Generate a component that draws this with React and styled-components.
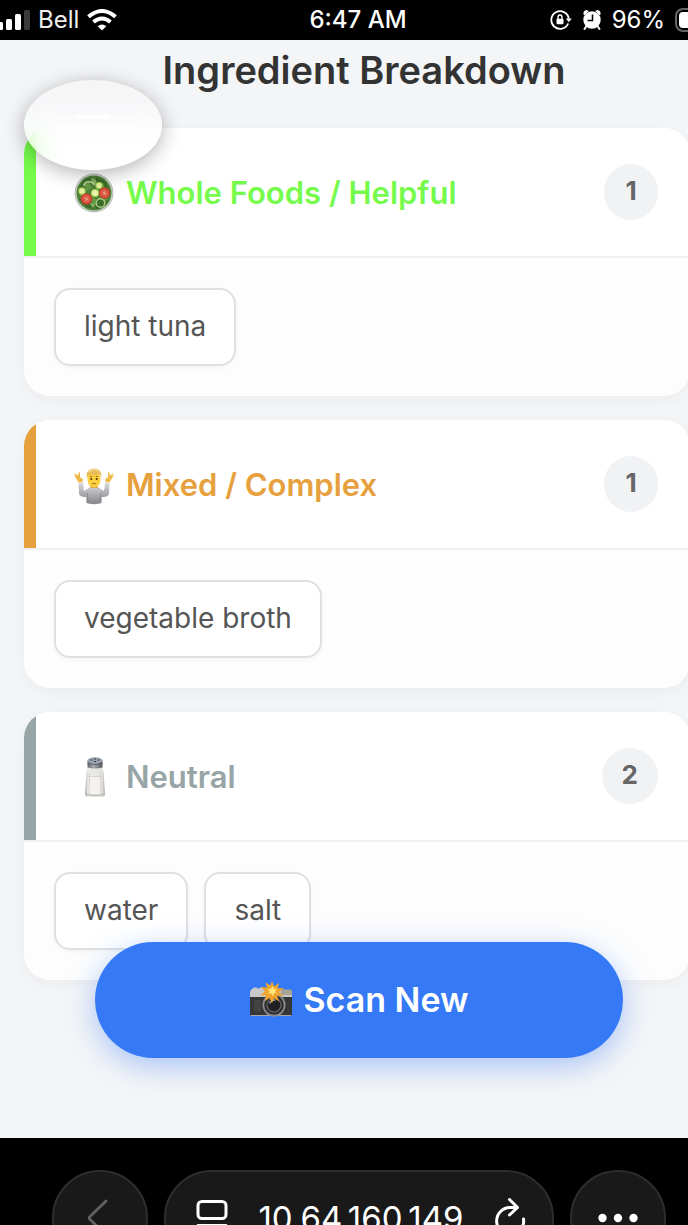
import { useState } from "react";
import styled, { createGlobalStyle } from "styled-components";

const groups = [
   { id: "helpful", title: "Whole Foods / Helpful", color: "#76fb4c", Icon: SaladIcon, items: ["light tuna"] },
   { id: "mixed", title: "Mixed / Complex", color: "#e6a03e", Icon: ShrugIcon, items: ["vegetable broth"] },
   { id: "neutral", title: "Neutral", color: "#98a5a6", Icon: SaltIcon, items: ["water", "salt"] },
]

function SaladIcon() {
   return (
      <svg width="40" height="40" viewBox="0 0 40 40" aria-hidden="true">
         <circle cx="20" cy="20" r="19.5" fill="#b9bdb9" />
         <circle cx="20" cy="20" r="18.5" fill="#cfd8ca" />
         <circle cx="20" cy="20" r="17.5" fill="#4f8239" />
         <path d="M5 15l5-8 7-3 3 6-6 6zM22 4l9 4 4 8-8 1-6-5zM5 26l8-3 5 7 2 6-8-2zM22 27l9-2 3 3-6 7-7 1z" fill="#3a6b2a" />
         <path d="M9 11l6-2 3 5-5 4zM24 9l5 1 2 5-6 1zM16 23l5 2 3 8-6-2zM29 24l5 1-3 5z" fill="#659a45" />
         <path d="M17 5l5 2 1 5-5-1zM6 21l5 1-3 3zM15 30l6 1-2 4z" fill="#85b25d" />
         <path d="M10 13c0-5 8-6 10-1" fill="none" stroke="#c4d49c" strokeWidth="1.4" />
         <circle cx="26.5" cy="30" r="4.2" fill="none" stroke="#a9c77f" strokeWidth="1.4" />
         <circle cx="8" cy="18" r="3.7" fill="#a8d552" />
         <circle cx="8" cy="18" r="2.6" fill="#e6f0a4" />
         <circle cx="25" cy="12.5" r="3.6" fill="#a8d552" />
         <circle cx="25" cy="12.5" r="2.5" fill="#e6f0a4" />
         <circle cx="12.5" cy="26" r="5.8" fill="#c9402f" />
         <circle cx="12.5" cy="26" r="4.2" fill="#dd5a45" />
         <circle cx="30.5" cy="20" r="5.7" fill="#c9402f" />
         <circle cx="30.5" cy="20" r="4.1" fill="#dd5a45" />
         <path d="M10.5 25l4 2M12 28l1-4M28.5 19l4 2M30 22l1-4" stroke="#eda584" strokeWidth="1" />
         <circle cx="21" cy="20" r="4" fill="#a8d552" />
         <circle cx="21" cy="20" r="2.9" fill="#eef3b0" />
      </svg>
   )
}

function ShrugIcon() {
   return (
      <svg width="40" height="40" viewBox="0 0 40 40" aria-hidden="true">
         <defs>
            <linearGradient id="shirt" x1="0" y1="0" x2="0" y2="1">
               <stop offset="0" stopColor="#cfcfd1" />
               <stop offset="1" stopColor="#85858a" />
            </linearGradient>
            <linearGradient id="sleeve" x1="0" y1="0" x2="0" y2="1">
               <stop offset="0" stopColor="#dcdcdf" />
               <stop offset="1" stopColor="#9c9ca1" />
            </linearGradient>
         </defs>
         <path d="M4.5 18l4.500-.5 1 8.500 5-3v8c-3 1.500-9 1.500-10-2z" fill="url(#sleeve)" />
         <path d="M35.500 18l-4.500-.5-1 8.500-5-3v8c3 1.500 9 1.500 10-2z" fill="url(#sleeve)" />
         <path d="M13 25c1-2.500 4-3.500 7-3.500s6 1 7 3.500l1 4-.5 9c-4 1.500-11 1.500-15 0L12 29z" fill="url(#shirt)" />
         <path d="M13.500 28l.5 9.500M26.500 28l-.5 9.500" stroke="#85858a" strokeWidth=".8" />
         <path d="M0 7.500l4 3 1-3.500 1 .5v4.500l3 2.500-.5 2.500-4 .5-2-3.500L0 10l2 .5z" fill="#edbb47" />
         <path d="M40 7.500l-4 3-1-3.500-1 .5v4.500l-3 2.500.5 2.500 4 .5 2-3.500L40 10l-2 .5z" fill="#edbb47" />
         <ellipse cx="20" cy="14.500" rx="6.500" ry="8" fill="#fbcf3d" />
         <path d="M16 20.500c2 2.500 6 2.500 8 0l-1 2.500h-6z" fill="#dba02b" />
         <path d="M13 14C11.500 7 14.500 3.500 20 3.500s8.500 3.500 7 10.500l-1-4.500c-4 1-7 .5-10-.5l-2 2z" fill="#e8bd5c" />
         <path d="M14.500 7c2-2.500 7-3 10-1" stroke="#f8e09c" strokeWidth="1.200" fill="none" />
         <circle cx="17.300" cy="14" r="1" fill="#4e3213" />
         <circle cx="22.700" cy="14" r="1" fill="#4e3213" />
         <path d="M15.800 11.800l2.400-.5M21.800 11.300l2.400.5M18 19q2-1.500 4 0" stroke="#94611a" strokeWidth=".9" fill="none" />
      </svg>
   )
}

function SaltIcon() {
   return (
      <svg width="40" height="40" viewBox="0 0 40 40" aria-hidden="true">
         <defs>
            <linearGradient id="glass">
               <stop offset="0" stopColor="#a9a8a6" />
               <stop offset=".15" stopColor="#eeedeb" />
               <stop offset=".85" stopColor="#e4e2df" />
               <stop offset="1" stopColor="#aeadab" />
            </linearGradient>
            <linearGradient id="cap">
               <stop offset="0" stopColor="#65686d" />
               <stop offset=".4" stopColor="#a5a9ae" />
               <stop offset="1" stopColor="#575a5f" />
            </linearGradient>
         </defs>
         <path d="M14 10.500h14l1.500 5L31 37c0 2.500-2 3-4 3H15c-2 0-4-.5-4-3l1.500-21.500z" fill="url(#glass)" />
         <path d="M16 20h10v17H16z" fill="#f4f2ef" />
         <path d="M15.500 15L15 37.500M26.500 15L27 37.500M13.500 19.500h15" stroke="#d2d0cd" strokeWidth=".8" />
         <path d="M12 37.500q9 2 18 0" stroke="#b0aeab" strokeWidth="1" fill="none" />
         <path d="M13.500 3.500h15v7q-7.500 2-15 0z" fill="url(#cap)" />
         <path d="M13.500 6.500q7.500 2 15 0" stroke="#55585c" strokeWidth=".9" fill="none" />
         <ellipse cx="21" cy="3.500" rx="7.500" ry="3.200" fill="#9ba3ae" />
         <path d="M16.500 3h2M20 2h2M23.500 3h2M20 4.500h2" stroke="#313b4c" strokeWidth="1.200" />
      </svg>
   )
}

function CameraIcon() {
   return (
      <svg width="44" height="36" viewBox="0 0 44 36" aria-hidden="true">
         <path d="M3 8l2-1.500h3L9 8l2-1.500h3L15 9h26q2 0 2 2v7H1v-6q0-3 2-4z" fill="#c9c9c9" />
         <path d="M32 8.500h9q2 0 2 2V14H32z" fill="#aaa293" />
         <path d="M1 16h42v17q0 2-2 2H3q-2 0-2-2z" fill="#363636" />
         <path d="M2 34.500h40" stroke="#a7a7a7" strokeWidth="1.200" />
         <path d="M5 19h7v12H5z" fill="#434343" />
         <circle cx="25" cy="24" r="11.500" fill="#8d8d8f" />
         <circle cx="25" cy="24" r="9.800" fill="#303033" />
         <circle cx="25" cy="24" r="7.500" fill="#66666a" />
         <circle cx="25" cy="24" r="6.300" fill="#202024" />
         <path d="M20.500 22.500q2-4 6-3.500" stroke="#a4a4ac" strokeWidth="1.500" fill="none" />
         <path d="M23 0l2 5.500 5-3.500-1.500 5.500 6.500-.5-5 4 4 4-6-.5 2 6-5-3.500-2 5-2.500-5-4.500 3 1-5.500-5.500 0 4.500-4.500-4.500-4 6.500.5-1.500-5 5 3z" fill="#f0a52c" />
         <path d="M24 5l1 3 3-.5-2 2.500 2 2-3 .2-1 3-2-3-3 .5 1.500-2.700-2-2 3 0z" fill="#ffe27a" />
      </svg>
   )
}

function SignalIcon() {
   return (
      <svg width="30" height="22" viewBox="0 0 30 22" aria-hidden="true" fill="#fff">
         <rect x="-4" y="13" width="7" height="8" rx="1.500" />
         <rect x="6" y="10" width="6" height="11" rx="1.500" />
         <rect x="15" y="5" width="6" height="16" rx="1.500" />
         <rect x="24" y="1" width="6" height="20" rx="1.500" fill="#3a3a3a" />
      </svg>
   )
}

function WifiIcon() {
   return (
      <svg width="30" height="22" viewBox="0 0 30 22" aria-hidden="true" fill="none" stroke="#fff" strokeWidth="4">
         <path d="M1.500 7.800q13.500-11.600 27 0" />
         <path d="M6.500 13q8.500-7 17 0" />
         <path d="M15 21.500l-4.300-4.300q4.300-3.400 8.600 0z" fill="#fff" stroke="none" />
      </svg>
   )
}

function RotationLockIcon() {
   return (
      <svg width="22" height="22" viewBox="0 0 22 22" aria-hidden="true" fill="none" stroke="#fff" strokeWidth="1.800">
         <path d="M18.200 14.500A8.800 8.800 0 1 1 18.800 9.500" />
         <path d="M15.800 9.500h6l-3 3.800z" fill="#fff" stroke="none" />
         <path d="M8 10V8.200q0-2.200 2-2.200t2 2.200V10" strokeWidth="1.400" />
         <rect x="6.500" y="9.800" width="7" height="5.500" rx="1" fill="#fff" stroke="none" />
      </svg>
   )
}

function AlarmIcon() {
   return (
      <svg width="20" height="22" viewBox="0 0 20 22" aria-hidden="true">
         <path d="M2 6.500Q0 2 4.500 1L7 2zM18 6.500Q20 2 15.500 1L13 2z" fill="#fff" />
         <path d="M4.500 17l-2 3M15.500 17l2 3" stroke="#fff" strokeWidth="2" strokeLinecap="round" />
         <circle cx="10" cy="11" r="8.700" fill="#fff" />
         <path d="M10.500 5.500v6H5.500" fill="none" stroke="#000" strokeWidth="1.500" />
      </svg>
   )
}

function BatteryIcon() {
   return (
      <svg width="13" height="24" viewBox="0 0 13 24" aria-hidden="true">
         <rect x="1" y="1" width="44" height="22" rx="7" fill="none" stroke="#666" strokeWidth="2" />
         <rect x="4" y="4" width="38" height="16" rx="4" fill="#fff" />
      </svg>
   )
}

function Group({ title, color, Icon, items }) {
   return (
      <Card>
         <CardHeader $color={color}>
            <CardLabel>
               <Icon />
               <CardTitle $color={color}>{title}</CardTitle>
            </CardLabel>
            <Count>{items.length}</Count>
         </CardHeader>
         <Chips>
            {items.map((item) => <Chip key={item}>{item}</Chip>)}
         </Chips>
      </Card>
   )
}

function App() {
   const [isMenuClicked, setisMenuClicked] = useState(false)

   return (
      <Phone>
         <GlobalStyle />
         <StatusBar>
            <StatusSide>
               <SignalIcon />
               <Carrier>Bell</Carrier>
               <WifiIcon />
            </StatusSide>
            <Time>6:47 AM</Time>
            <StatusSide $right>
               <RotationLockIcon />
               <AlarmIcon />
               <span>96%</span>
               <BatteryIcon />
            </StatusSide>
         </StatusBar>

         <Screen>
            <PageTitle>Ingredient Breakdown</PageTitle>
            <List>
               {groups.map((group) => <Group key={group.id} {...group} />)}
            </List>
            <MenuButton
               type="button"
               aria-label="Menu"
               aria-expanded={isMenuClicked}
               onClick={() => setisMenuClicked(!isMenuClicked)}
            >
               <MenuLine />
               <MenuLine />
               <MenuLine />
            </MenuButton>
            <ScanButton type="button">
               <CameraIcon />
               Scan New
            </ScanButton>
         </Screen>

         <BrowserBar>
            <RoundButton type="button" aria-label="Back">
               <svg width="24" height="40" viewBox="0 0 24 40" fill="none" stroke="#606060" strokeWidth="3" strokeLinecap="round" strokeLinejoin="round">
                  <path d="M18 3L0.500 20l17.500 17" />
               </svg>
            </RoundButton>
            <AddressBar>
               <PlainButton type="button" aria-label="Page settings">
                  <svg width="32" height="36" viewBox="0 0 32 36" fill="none" stroke="#fff" strokeWidth="3">
                     <rect x="2" y="1.500" width="28" height="17" rx="4" />
                     <path d="M2 25.500h28M2 33h18" strokeLinecap="round" />
                  </svg>
               </PlainButton>
               <Address href="#">10.64.160.149</Address>
               <PlainButton type="button" aria-label="Reload">
                  <svg width="32" height="42" viewBox="0 0 32 42" fill="none" stroke="#fff" strokeWidth="3" strokeLinecap="round" strokeLinejoin="round">
                     <path d="M23 10.500H16.500A13.500 13.500 0 1 0 29.500 22" />
                     <path d="M15.500 2.500l8 8-8 7.500" />
                  </svg>
               </PlainButton>
            </AddressBar>
            <RoundButton type="button" aria-label="More">
               <svg width="40" height="10" viewBox="0 0 40 10" fill="#fff">
                  <circle cx="4.500" cy="5" r="4.200" />
                  <circle cx="20" cy="5" r="4.200" />
                  <circle cx="35.500" cy="5" r="4.200" />
               </svg>
            </RoundButton>
         </BrowserBar>
      </Phone>
   )
}

export default App;

const GlobalStyle = createGlobalStyle`
   * {
      box-sizing: border-box;
   }
   body {
      margin: 0;
      background-color: #000;
      font-family: Inter, "Liberation Sans", sans-serif;
   }
   button {
      font-family: inherit;
      border: none;
      cursor: pointer;
   }
   svg {
      display: block;
      flex-shrink: 0;
   }
`;

const Phone = styled.div`
   height: 100vh;
   display: flex;
   flex-direction: column;
   overflow: hidden;
`;

const StatusBar = styled.header`
   height: 40px;
   flex-shrink: 0;
   display: grid;
   grid-template-columns: 1fr auto 1fr;
   align-items: center;
   background-color: #000;
   color: #fff;
   font-size: 24px;
   line-height: 32px;
   overflow: hidden;
`;

const StatusSide = styled.div`
   display: flex;
   align-items: center;
   gap: ${({ $right }) => ($right ? "10px" : "8px")};
   justify-content: ${({ $right }) => ($right ? "flex-end" : "flex-start")};
`;

const Carrier = styled.span`
   color: #eee;
`;

const Time = styled.span`
   font-weight: 500;
   margin-left: 28px;
`;

const Screen = styled.main`
   flex: 1;
   min-height: 0;
   position: relative;
   overflow: hidden;
   background-color: #f4f5f7;
`;

const PageTitle = styled.h1`
   margin: 0;
   padding: 6px 0 34px 40px;
   text-align: center;
   color: #333;
   font-size: 38px;
   font-weight: 600;
   line-height: 48px;
`;

const List = styled.div`
   display: flex;
   flex-direction: column;
   gap: 24px;
   margin: 0 -2px 0 24px;
`;

const Card = styled.section`
   border-radius: 26px;
   overflow: hidden;
   background-color: #fdfdfd;
   box-shadow: 0 4px 16px rgba(0, 0, 0, 0.04);
`;

const CardHeader = styled.div`
   height: 128px;
   display: flex;
   align-items: center;
   justify-content: space-between;
   padding: 0 32px 0 38px;
   background-color: #fff;
   border-left: 12px solid ${({ $color }) => $color};
`;

const CardLabel = styled.div`
   display: flex;
   align-items: center;
   gap: 12px;
   padding-top: 2px;
`;

const CardTitle = styled.h2`
   margin: 0;
   color: ${({ $color }) => $color};
   font-size: 31px;
   font-weight: 600;
   line-height: 40px;
`;

const Count = styled.span`
   min-width: 54px;
   padding: 0 20px 2px;
   border-radius: 28px;
   background-color: #f1f2f4;
   color: #666;
   text-align: center;
   font-size: 26px;
   font-weight: 700;
   line-height: 54px;
`;

const Chips = styled.div`
   display: flex;
   flex-wrap: wrap;
   gap: 16px;
   padding: 30px;
   border-top: 2px solid #eff0f1;
`;

const Chip = styled.span`
   padding: 16px 28px 18px;
   border: 2px solid #e0e0e0;
   border-radius: 16px;
   background-color: #fff;
   box-shadow: 0 2px 4px rgba(0, 0, 0, 0.03);
   color: #555;
   font-size: 28px;
   line-height: 40px;
`;

const MenuButton = styled.button`
   position: absolute;
   top: 40px;
   left: 24px;
   width: 138px;
   height: 90px;
   display: flex;
   flex-direction: column;
   align-items: center;
   justify-content: center;
   gap: 8px;
   padding: 8px 0 0;
   border-radius: 50%;
   background: linear-gradient(rgba(255, 255, 255, 0.1) 20%, rgba(255, 255, 255, 0.6) 50%);
   backdrop-filter: blur(12px);
   box-shadow: 0 4px 20px rgba(0, 0, 0, 0.3);
`;

const MenuLine = styled.span`
   width: 34px;
   height: 4px;
   background-color: #fff;
`;

const ScanButton = styled.button`
   position: absolute;
   left: 95px;
   right: 65px;
   bottom: 80px;
   height: 116px;
   display: flex;
   align-items: center;
   justify-content: center;
   gap: 10px;
   padding: 0 0 2px;
   border-radius: 58px;
   background-color: #3579f6;
   box-shadow: 0 8px 30px rgba(53, 121, 246, 0.4);
   color: #fff;
   font-size: 34px;
   font-weight: 600;
`;

const BrowserBar = styled.footer`
   height: 87px;
   flex-shrink: 0;
   display: flex;
   align-items: flex-start;
   gap: 16px;
   padding: 32px 22px 0 52px;
   background-color: #000;
   overflow: hidden;
`;

const RoundButton = styled.button`
   width: 96px;
   height: 96px;
   flex-shrink: 0;
   display: flex;
   align-items: center;
   justify-content: center;
   padding: 0;
   border: 2px solid #2e2e2e;
   border-radius: 50%;
   background-color: #191919;
`;

const AddressBar = styled.div`
   flex: 1;
   height: 96px;
   display: flex;
   align-items: center;
   justify-content: space-between;
   padding: 0 26px 0 30px;
   border: 2px solid #2e2e2e;
   border-radius: 48px;
   background-color: #191919;
`;

const PlainButton = styled.button`
   padding: 0;
   background: none;
`;

const Address = styled.a`
   color: #fff;
   font-size: 33px;
   line-height: 40px;
   text-decoration: none;
`;
